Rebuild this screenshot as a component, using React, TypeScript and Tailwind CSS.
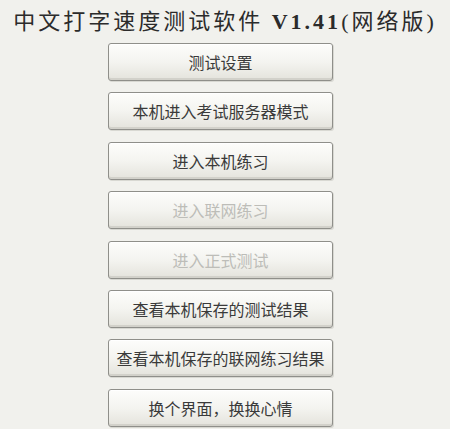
const buttons = [
  { label: "测试设置", disabled: false },
  { label: "本机进入考试服务器模式", disabled: false },
  { label: "进入本机练习", disabled: false },
  { label: "进入联网练习", disabled: true },
  { label: "进入正式测试", disabled: true },
  { label: "查看本机保存的测试结果", disabled: false },
  { label: "查看本机保存的联网练习结果", disabled: false },
  { label: "换个界面，换换心情", disabled: false },
];

function XpButton({ label, disabled }: { label: string; disabled: boolean }) {
  return (
    <button
      disabled={disabled}
      className={
        "h-[38px] w-[225px] shrink-0 rounded-[3px] border border-[#8f8f8a] bg-gradient-to-b from-[#fdfdfb] via-[#f4f4f0] to-[#e4e3dc] " +
        "shadow-[inset_0_1px_0_#ffffff,inset_0_-2px_0_#d2d1ca,1px_1px_0_#d8d8d2] text-[16px] leading-none " +
        (disabled ? "text-[#bdbdb8]" : "text-[#3a3a3a]")
      }
    >
      {label}
    </button>
  );
}

export default function App() {
  return (
    <div
      className="flex h-[429px] w-[450px] flex-col overflow-hidden bg-[#f1f1ed]"
      style={{ fontFamily: '"Noto Sans CJK SC", sans-serif' }}
    >
      <h1
        className="mt-[8px] h-[28px] self-center whitespace-nowrap text-[22px] font-normal leading-[28px] tracking-[3px] text-[#2b2b2b]"
        style={{ fontFamily: '"Liberation Serif", "Noto Sans CJK SC", serif' }}
      >
        中文打字速度测试软件 <span className="font-bold">V1.41</span>(网络版)
      </h1>
      <div className="ml-[108px] mt-[7px] flex flex-col gap-[11.4px]">
        {buttons.map((b) => (
          <XpButton key={b.label} label={b.label} disabled={b.disabled} />
        ))}
      </div>
    </div>
  );
}
